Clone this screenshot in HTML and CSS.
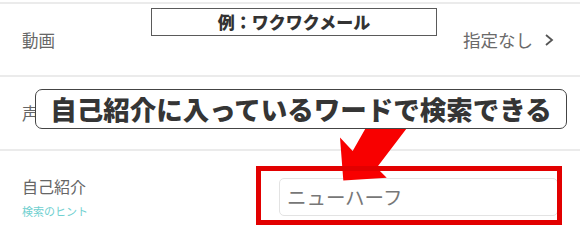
FILE: index.html
```html
<!DOCTYPE html>
<html lang="ja">
<head>
<meta charset="utf-8">
<title>検索条件</title>
<link rel="stylesheet" href="styles.css">
</head>
<body>
<div class="page">
  <div class="list">
    <div class="row">
      <div class="label">動画</div>
      <div class="value">指定なし<svg class="chev" width="10" height="12" viewBox="0 0 10 12"><polyline points="2,1 8,6 2,11" fill="none" stroke="#555" stroke-width="1.8" stroke-linejoin="miter"/></svg></div>
    </div>
    <div class="row">
      <div class="label">声</div>
    </div>
    <div class="row row-intro">
      <div class="label-col">
        <div class="label">自己紹介</div>
        <div class="hint">検索のヒント</div>
      </div>
      <div class="input">ニューハーフ</div>
    </div>
  </div>

  <div class="example">例：ワクワクメール</div>
  <svg class="arrow" width="580" height="239" viewBox="0 0 580 239">
    <polygon points="343.3,180.5 340,137.5 352.7,151 368,124 410,124 376.7,167.7 386.7,177.7" fill="#f80000"/>
  </svg>
  <div class="callout">自己紹介に入っているワードで検索できる</div>
  <div class="frame"></div>
</div>
</body>
</html>
```

FILE: styles.css
```css
html, body {
  margin: 0;
  padding: 0;
  background: #fff;
}
body {
  font-family: "Noto Sans CJK JP", "Noto Sans", sans-serif;
  color: #666;
  overflow: hidden;
}
.page {
  position: relative;
  width: 580px;
  height: 239px;
  overflow: hidden;
}
.list {
  padding-top: 2px;
}
.row {
  display: flex;
  align-items: center;
  justify-content: space-between;
  border-top: 2px solid #ebebeb;
  height: 72px;
  box-sizing: border-box;
  padding: 0 26px 0 22px;
}
.row:first-child {
  height: 73px;
}
.row + .row {
  height: 74px;
}
.label {
  font-size: 16.5px;
  line-height: 16px;
  color: #666;
}
.value {
  display: flex;
  align-items: center;
  font-size: 17.5px;
  line-height: 18px;
  color: #6a6a6a;
}
.chev {
  margin-left: 11px;
  margin-top: 1px;
}
.row.row-intro {
  height: 120px;
  align-items: flex-start;
  justify-content: flex-start;
  padding: 27px 22px 0 22px;
}
.label-col {
  flex: 0 0 257px;
}
.label-col .label {
  font-size: 16px;
}
.hint {
  margin-top: 12px;
  font-size: 11px;
  line-height: 11px;
  color: #6fd0d0;
}
.input {
  flex: 1;
  height: 38px;
  box-sizing: border-box;
  border: 1px solid #e3e3e3;
  border-radius: 5px;
  padding-left: 7px;
  font-size: 19.5px;
  line-height: 36px;
  color: #777;
}
.example {
  position: absolute;
  left: 151px;
  top: 8px;
  width: 286px;
  height: 28px;
  box-sizing: border-box;
  border: 1px solid #5a5a5a;
  background: #fff;
  text-align: center;
  font-size: 17px;
  line-height: 26px;
  font-weight: 900;
  color: #333;
}
.arrow {
  position: absolute;
  left: 0;
  top: 0;
}
.callout {
  position: absolute;
  left: 35px;
  top: 89px;
  width: 532px;
  height: 40px;
  box-sizing: border-box;
  border: 1px solid #444;
  border-radius: 7px;
  background: #fff;
  text-align: center;
  font-size: 26.5px;
  line-height: 38px;
  font-weight: 900;
  color: #353535;
  white-space: nowrap;
}
.frame {
  position: absolute;
  left: 256px;
  top: 166px;
  width: 306px;
  height: 59px;
  box-sizing: border-box;
  border: 5px solid #e20000;
}
```
